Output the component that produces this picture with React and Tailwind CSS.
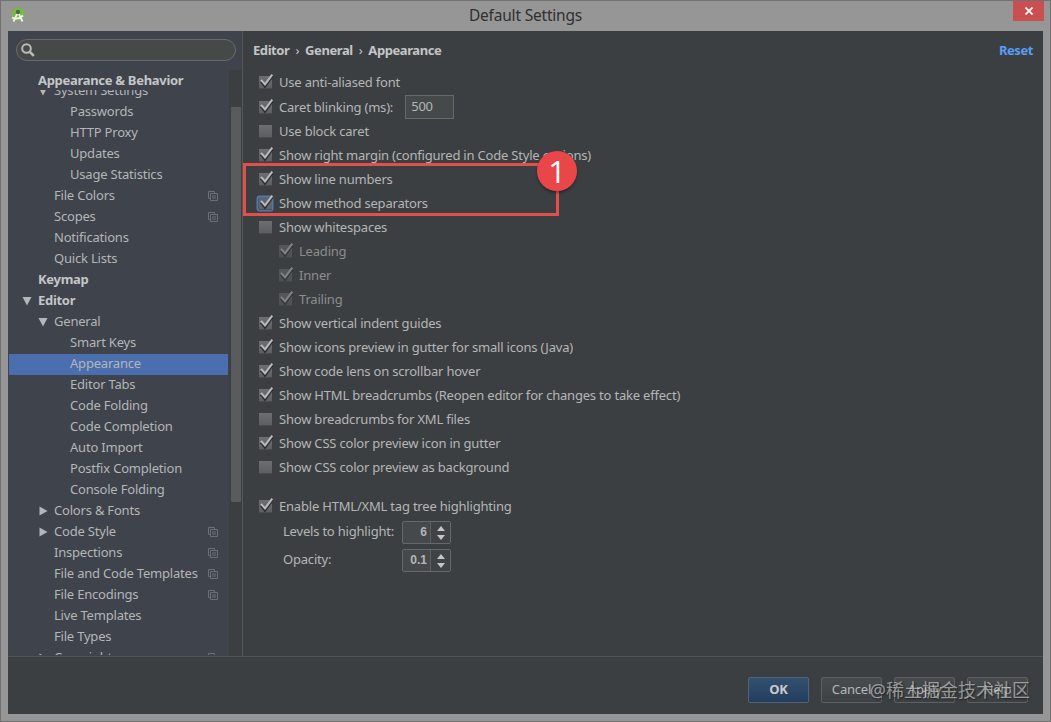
import clsx from 'clsx';

const treeItems = [
  { label: 'System Settings', level: 1, arrow: 'down' },
  { label: 'Passwords', level: 2 },
  { label: 'HTTP Proxy', level: 2 },
  { label: 'Updates', level: 2 },
  { label: 'Usage Statistics', level: 2 },
  { label: 'File Colors', level: 1, project: true },
  { label: 'Scopes', level: 1, project: true },
  { label: 'Notifications', level: 1 },
  { label: 'Quick Lists', level: 1 },
  { label: 'Keymap', level: 0 },
  { label: 'Editor', level: 0, arrow: 'down' },
  { label: 'General', level: 1, arrow: 'down' },
  { label: 'Smart Keys', level: 2 },
  { label: 'Appearance', level: 2, selected: true },
  { label: 'Editor Tabs', level: 2 },
  { label: 'Code Folding', level: 2 },
  { label: 'Code Completion', level: 2 },
  { label: 'Auto Import', level: 2 },
  { label: 'Postfix Completion', level: 2 },
  { label: 'Console Folding', level: 2 },
  { label: 'Colors & Fonts', level: 1, arrow: 'right' },
  { label: 'Code Style', level: 1, arrow: 'right', project: true },
  { label: 'Inspections', level: 1, project: true },
  { label: 'File and Code Templates', level: 1, project: true },
  { label: 'File Encodings', level: 1, project: true },
  { label: 'Live Templates', level: 1 },
  { label: 'File Types', level: 1 },
  { label: 'Copyright', level: 1, arrow: 'right', project: true },
];

const options = [
  { label: 'Use block caret' },
  { label: 'Show right margin (configured in Code Style options)', checked: true },
  { label: 'Show line numbers', checked: true },
  { label: 'Show method separators', checked: true, focused: true },
  { label: 'Show whitespaces' },
  { label: 'Leading', checked: true, disabled: true },
  { label: 'Inner', checked: true, disabled: true },
  { label: 'Trailing', checked: true, disabled: true },
  { label: 'Show vertical indent guides', checked: true },
  { label: 'Show icons preview in gutter for small icons (Java)', checked: true },
  { label: 'Show code lens on scrollbar hover', checked: true },
  { label: 'Show HTML breadcrumbs (Reopen editor for changes to take effect)', checked: true },
  { label: 'Show breadcrumbs for XML files' },
  { label: 'Show CSS color preview icon in gutter', checked: true },
  { label: 'Show CSS color preview as background' },
];

function Arrow({ dir }) {
  return (
    <svg width="10" height="10" viewBox="0 0 10 10" fill="#b4b6b9">
      {dir === 'down' && <path d="M0.5 1h9L5 9.5z" />}
      {dir === 'right' && <path d="M1.5 0.5v9L9.5 5z" />}
    </svg>
  );
}

function ProjectIcon() {
  return (
    <svg width="10" height="10" viewBox="0 0 10 10" fill="none" stroke="#6b6f77">
      <path d="M2.5 7.5h-2v-7h6v2" />
      <path d="M2.5 2.5h7v7h-7z" />
      <path d="M4 5h4M4 7h4" />
    </svg>
  );
}

function TreeRow({ item }) {
  return (
    <div
      className={clsx(
        'flex h-[21px] w-[219px] items-center pr-[10px]',
        item.level === 0 && 'pl-[13px] font-bold tracking-[-0.3px] text-[#c4c6c8]',
        item.level === 1 && 'pl-[29px]',
        item.level === 2 && 'pl-[45px]',
        item.selected && 'bg-[#4b6eaf]'
      )}
    >
      <span className="mr-[6px] shrink-0">
        <Arrow dir={item.arrow} />
      </span>
      <span className="grow pb-[2px]">{item.label}</span>
      {item.project && <ProjectIcon />}
    </div>
  );
}

function Sidebar() {
  return (
    <aside className="flex w-[235px] shrink-0 flex-col border-r border-[#55585a] bg-[#3e434c]">
      <div className="mt-[8px] ml-[8px] flex h-[22px] w-[220px] items-center rounded-full border border-[#686c6c] bg-[#454948] pl-[4px]">
        <svg width="14" height="14" viewBox="0 0 14 14" fill="none" stroke="#b9bbbb">
          <circle cx="5.5" cy="5.5" r="4.3" strokeWidth="2" />
          <path d="M8.8 8.8l4 4" strokeWidth="2.6" />
        </svg>
      </div>
      <div className="mt-[9px] flex min-h-0 grow">
        <div className="flex w-[221px] flex-col pl-px">
          <div className="flex h-[20px] shrink-0 items-center pl-[29px] font-bold tracking-[-0.3px] text-[#c4c6c8]">
            Appearance &amp; Behavior
          </div>
          <div className="mb-px min-h-0 grow overflow-hidden">
            <div className="-mt-[9px]">
              {treeItems.map((item) => (
                <TreeRow key={item.label} item={item} />
              ))}
            </div>
          </div>
        </div>
        <div className="grow bg-[#3c3f41] pt-[37px] pl-[2px]">
          <div className="h-[395px] w-[10px] rounded-[1px] bg-[#595b5c]"></div>
        </div>
      </div>
    </aside>
  );
}

function Checkbox({ checked, focused, disabled }) {
  return (
    <svg
      className={clsx('shrink-0', disabled && 'opacity-55')}
      width="18"
      height="18"
      viewBox="0 0 18 18"
    >
      <defs>
        <linearGradient id="box" x1="0" y1="0" x2="0" y2="1">
          <stop offset="0" stopColor="#6c6e70" />
          <stop offset="1" stopColor="#5b5e60" />
        </linearGradient>
      </defs>
      {focused && <rect x="1.5" y="2.5" width="15" height="14" rx="2" fill="none" stroke="#5577a8" strokeWidth="2" />}
      <rect x="3" y="3" width="13" height="13" fill={focused ? '#5b6577' : 'url(#box)'} />
      <path d="M3 15.5h13" stroke="#494c4e" />
      {checked && (
        <>
          <path d="M5 8.5l4 5L16.5 3" fill="none" stroke="#2c2e2f" strokeWidth="2.4" />
          <path d="M5 6.8l4 4.6L16.3 1.6" fill="none" stroke="#b9bbbb" strokeWidth="2" />
        </>
      )}
    </svg>
  );
}

function Option({ option }) {
  return (
    <div className={clsx('flex h-6 items-center', option.disabled && 'pl-[20px] text-[#8b8d8e]')}>
      <Checkbox {...option} />
      <span className="ml-[5px] whitespace-nowrap">{option.label}</span>
    </div>
  );
}

function Spinner({ value }) {
  return (
    <div className="flex h-[23px] w-[49px] rounded-[2px] border border-[#66696b] bg-[#45494a] font-['Liberation_Sans'] text-[12px] font-bold tracking-normal">
      <span className="flex w-[28px] items-center justify-end border-r border-[#5c6062] pr-[3px] pb-[2px]">{value}</span>
      <span className="flex grow items-center justify-center bg-[#3f4345]">
        <svg width="8" height="14" viewBox="0 0 8 14" fill="#c3c5c6">
          <path d="M4 0l4 5H0zM4 14l4-5H0z" />
        </svg>
      </span>
    </div>
  );
}

function Content() {
  return (
    <main className="relative grow pl-[10px]">
      <div className="flex h-[39px] items-center pr-[10px] pb-[2px] font-bold tracking-[-0.42px] text-[#c3c5c6]">
        <span>Editor</span>
        <span className="mx-[6px] font-normal">›</span>
        <span>General</span>
        <span className="mx-[6px] font-normal">›</span>
        <span>Appearance</span>
        <a className="ml-auto text-[#589df6]">Reset</a>
      </div>
      <div className="pl-[3px]">
        <Option option={{ label: 'Use anti-aliased font', checked: true }} />
        <div className="flex h-[25px] items-center">
          <Option option={{ label: 'Caret blinking (ms):', checked: true }} />
          <div className="ml-[12px] flex h-[24px] w-[49px] items-center border border-[#66696b] bg-[#45494a] pb-px pl-[5px]">500</div>
        </div>
        {options.map((option) => (
          <Option key={option.label} option={option} />
        ))}
        <div className="mt-[15px]">
          <Option option={{ label: 'Enable HTML/XML tag tree highlighting', checked: true }} />
        </div>
        <div className="mt-[3px] flex h-[23px] items-center pl-[27px]">
          <span className="w-[119px] pb-[3px]">Levels to highlight:</span>
          <Spinner value="6" />
        </div>
        <div className="mt-[5px] flex h-[23px] items-center pl-[27px]">
          <span className="w-[119px] pb-[3px]">Opacity:</span>
          <Spinner value="0.1" />
        </div>
      </div>

      {/* Callout */}
      <div className="absolute top-[132px] left-0 h-[53px] w-[316px] border-3 border-[#e3504c]"></div>
      <div className="absolute top-[120px] left-[294px] flex size-[40px] items-center justify-center rounded-full bg-[#e94649] font-['Open_Sans'] text-[31px] text-white shadow-[0_2px_3px_rgba(0,0,0,0.35)]">
        1
      </div>
    </main>
  );
}

function Button({ children, primary }) {
  return (
    <button
      className={clsx(
        'h-[26px] w-[61px] rounded-[2px] border bg-linear-to-b pb-[2px]',
        primary
          ? 'border-[#4f6479] from-[#34506f] to-[#233d5e] font-bold text-[#c9cbcd]'
          : 'border-[#5c6062] from-[#484c4f] to-[#3d4143]'
      )}
    >
      {children}
    </button>
  );
}

export default function App() {
  return (
    <div className="flex h-[722px] w-[1051px] flex-col border border-[#717171] bg-[#969696] px-[7px] pb-[7px] font-['Noto_Sans','Noto_Sans_CJK_SC',sans-serif] text-[13px] leading-[20px] tracking-[-0.2px] text-[#b4b6b7]">
      <header className="relative flex h-[30px] shrink-0 items-center justify-center pb-[2px] text-[15.5px] text-[#303030]">
        <svg className="absolute top-[6px] left-[3px]" width="15" height="16" viewBox="0 0 15 16">
          <circle cx="7" cy="7" r="6.5" fill="#79b93f" />
          <path d="M2.5 14.5L7 5l4.5 9.5M1 10.5q6 3 11-2" fill="none" stroke="#f1f3ee" strokeWidth="1.8" />
          <circle cx="7" cy="5" r="2.2" fill="#446b4c" />
        </svg>
        Default Settings
        <button className="absolute top-0 -right-px flex h-[20px] w-[31px] items-center justify-center bg-[#c94f50]">
          <svg width="8" height="8" viewBox="0 0 8 8" stroke="#fff" strokeWidth="1.7">
            <path d="M0.5 0.5l7 7M7.5 0.5l-7 7" />
          </svg>
        </button>
      </header>
      <div className="flex min-h-0 grow flex-col bg-[#3c3f41]">
        <div className="flex h-[625px] shrink-0">
          <Sidebar />
          <Content />
        </div>
        <footer className="relative flex grow items-center justify-end gap-[12px] border-t border-[#515456] pt-[8px] pr-[15px]">
          <Button primary>OK</Button>
          <Button>Cancel</Button>
          <Button>Apply</Button>
          <Button>Help</Button>
          <div className="absolute top-[19px] right-[13px] text-[18px] leading-[28px] tracking-normal whitespace-nowrap text-white/50 [text-shadow:1px_1px_2px_rgba(0,0,0,0.6)]">
            @稀土掘金技术社区
          </div>
        </footer>
      </div>
    </div>
  );
}
